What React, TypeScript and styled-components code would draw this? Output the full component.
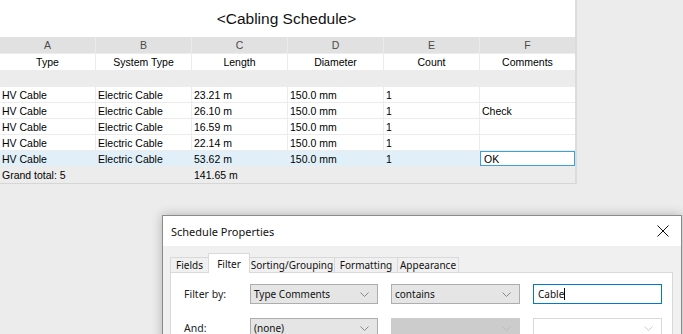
import styled, { createGlobalStyle } from 'styled-components';

const GlobalStyle = createGlobalStyle`
    html, body {
        margin: 0;
        padding: 0;
        background: #ececec;
        overflow: hidden;
    }
    #root {
        width: 683px;
        height: 334px;
    }
`;

const Page = styled.div`
    position: relative;
    width: 683px;
    height: 334px;
    overflow: hidden;
    background: #ececec;
    font-family: 'Liberation Sans', Arial, sans-serif;
`;

const Schedule = styled.div`
    width: 575px;
    background: #ececec;
    border-right: 2px solid #dcdcdc;
    border-bottom: 1px solid #d6d6d6;
`;

const TitleBar = styled.div`
    height: 37px;
    display: flex;
    align-items: center;
    justify-content: center;
    background: #fff;
    font-size: 15.5px;
    color: #111;
    padding-right: 2px;
`;

const Row = styled.div<{ $bg?: string; $h?: number }>`
    display: grid;
    grid-template-columns: 95px 96px 96px 96px 96px 96px;
    height: ${(p) => p.$h ?? 16}px;
    background: ${(p) => p.$bg ?? '#fff'};
    border-bottom: 1px solid #ececec;
    box-sizing: border-box;
`;

const Cell = styled.div<{ $center?: boolean; $sep?: string }>`
    display: flex;
    align-items: center;
    justify-content: ${(p) => (p.$center ? 'center' : 'flex-start')};
    padding-left: ${(p) => (p.$center ? 0 : 2)}px;
    border-left: 1px solid ${(p) => p.$sep ?? '#ececec'};
    font-size: 10.5px;
    color: #000;
    white-space: nowrap;
    overflow: hidden;

    &:first-child {
        border-left: none;
    }
`;

const Letter = styled(Cell)`
    color: #4a4a4a;
`;

const EditBox = styled.div`
    flex: 1;
    align-self: stretch;
    margin: 0 0 0 -2px;
    border: 1px solid #3ba2dc;
    background: #fff;
    display: flex;
    align-items: center;
    padding-left: 3px;
`;

/* ---------- dialog ---------- */

const Dialog = styled.div`
    position: absolute;
    left: 162px;
    top: 215px;
    width: 518px;
    height: 140px;
    background: #f0f0f0;
    border: 1px solid #8a8a8a;
    box-shadow: 0 0 10px rgba(0, 0, 0, 0.25);
    font-family: 'Noto Sans', 'Segoe UI', sans-serif;
    color: #111;
`;

const DialogHeader = styled.div`
    height: 30px;
    background: #fff;
    display: flex;
    align-items: center;
    justify-content: space-between;
    padding: 0 11px 0 8px;
    font-size: 11px;
`;

const CloseButton = styled.div`
    width: 14px;
    height: 14px;
    display: flex;
    align-items: center;
    justify-content: center;
`;

const DialogBody = styled.div`
    padding: 6px 7px 0 7px;
`;

const TabStrip = styled.div`
    display: flex;
    align-items: flex-end;
    height: 20px;
`;

const Tab = styled.div<{ $active?: boolean; $w: number }>`
    width: ${(p) => p.$w}px;
    height: ${(p) => (p.$active ? 20 : 15)}px;
    display: flex;
    align-items: center;
    justify-content: center;
    white-space: nowrap;
    font-size: 10px;
    background: ${(p) => (p.$active ? '#fff' : '#f0f0f0')};
    border: 1px solid #d9d9d9;
    border-bottom: none;
    margin-left: -1px;
    position: relative;
    z-index: ${(p) => (p.$active ? 1 : 0)};
    box-sizing: border-box;
    margin-bottom: ${(p) => (p.$active ? -1 : 0)}px;

    &:first-child {
        margin-left: 0;
    }
`;

const Panel = styled.div`
    width: 503px;
    height: 80px;
    background: #fff;
    border: 1px solid #d9d9d9;
    box-sizing: border-box;
    padding: 11px 0 0 12px;
    display: grid;
    grid-template-columns: 54px 128px 129px 129px;
    column-gap: 13px;
    row-gap: 14px;
    align-items: center;
    grid-auto-rows: 20px;
`;

const Label = styled.div`
    font-size: 10.5px;
    color: #222;
    padding-left: 1px;
`;

const Select = styled.div<{ $disabled?: boolean; $plain?: boolean }>`
    height: 20px;
    box-sizing: border-box;
    border: 1px solid ${(p) => (p.$disabled ? '#cccccc' : p.$plain ? '#d9d9d9' : '#adadad')};
    background: ${(p) => (p.$disabled ? '#cccccc' : p.$plain ? '#fff' : '#e5e5e5')};
    display: flex;
    align-items: center;
    justify-content: space-between;
    padding: 0 8px 0 3px;
    font-size: 10px;
    color: #111;
`;

const TextInput = styled.div`
    height: 20px;
    box-sizing: border-box;
    border: 1px solid #0078d7;
    background: #fff;
    display: flex;
    align-items: center;
    padding-left: 4px;
    font-size: 10px;
`;

const Caret = styled.span`
    display: inline-block;
    width: 1px;
    height: 12px;
    background: #000;
`;

const Chevron = ({ color = '#888' }: { color?: string }) => (
    <svg width="9" height="5" viewBox="0 0 9 5">
        <path d="M0.5 0.5 L4.5 4.5 L8.5 0.5" fill="none" stroke={color} strokeWidth="1" />
    </svg>
);

const rows = [
    { len: '23.21 m', comment: '' },
    { len: '26.10 m', comment: 'Check' },
    { len: '16.59 m', comment: '' },
    { len: '22.14 m', comment: '' },
    { len: '53.62 m', comment: 'OK', selected: true },
];

const letters = ['A', 'B', 'C', 'D', 'E', 'F'];
const headers = ['Type', 'System Type', 'Length', 'Diameter', 'Count', 'Comments'];

const tabs = [
    { label: 'Fields', w: 39 },
    { label: 'Filter', w: 42, active: true },
    { label: 'Sorting/Grouping', w: 86 },
    { label: 'Formatting', w: 64 },
    { label: 'Appearance', w: 62 },
];

const App = () => {
    return (
        <Page>
            <GlobalStyle />
            <Schedule>
                <TitleBar>&lt;Cabling Schedule&gt;</TitleBar>
                <Row $bg="#e1e1e1" $h={17}>
                    {letters.map((l) => (
                        <Letter key={l} $center $sep="#ebebeb">
                            {l}
                        </Letter>
                    ))}
                </Row>
                <Row $h={17}>
                    {headers.map((h) => (
                        <Cell key={h} $center>
                            {h}
                        </Cell>
                    ))}
                </Row>
                <Row $bg="#ececec">
                    {letters.map((l) => (
                        <Cell key={l} $sep="#ececec" />
                    ))}
                </Row>
                {rows.map((r, i) => (
                    <Row key={i} $bg={r.selected ? '#e1f0f8' : '#fff'}>
                        <Cell>HV Cable</Cell>
                        <Cell>Electric Cable</Cell>
                        <Cell>{r.len}</Cell>
                        <Cell>150.0 mm</Cell>
                        <Cell>1</Cell>
                        <Cell>{r.selected ? <EditBox>{r.comment}</EditBox> : r.comment}</Cell>
                    </Row>
                ))}
                <Row $bg="#ececec">
                    <Cell $sep="#ececec">Grand total: 5</Cell>
                    <Cell $sep="#ececec" />
                    <Cell $sep="#ececec">141.65 m</Cell>
                    <Cell $sep="#ececec" />
                    <Cell $sep="#ececec" />
                    <Cell $sep="#ececec" />
                </Row>
            </Schedule>

            <Dialog>
                <DialogHeader>
                    <span>Schedule Properties</span>
                    <CloseButton>
                        <svg width="12" height="12" viewBox="0 0 12 12">
                            <path d="M0.5 0.5 L11.5 11.5 M11.5 0.5 L0.5 11.5" stroke="#111" strokeWidth="1" />
                        </svg>
                    </CloseButton>
                </DialogHeader>
                <DialogBody>
                    <TabStrip>
                        {tabs.map((t) => (
                            <Tab key={t.label} $w={t.w} $active={t.active}>
                                {t.label}
                            </Tab>
                        ))}
                    </TabStrip>
                    <Panel>
                        <Label>Filter by:</Label>
                        <Select>
                            Type Comments
                            <Chevron />
                        </Select>
                        <Select>
                            contains
                            <Chevron />
                        </Select>
                        <TextInput>
                            Cable
                            <Caret />
                        </TextInput>
                        <Label>And:</Label>
                        <Select>
                            (none)
                            <Chevron />
                        </Select>
                        <Select $disabled>
                            <span />
                            <Chevron color="#bbb" />
                        </Select>
                        <Select $plain>
                            <span />
                            <Chevron color="#ccc" />
                        </Select>
                    </Panel>
                </DialogBody>
            </Dialog>
        </Page>
    );
};

export default App;
